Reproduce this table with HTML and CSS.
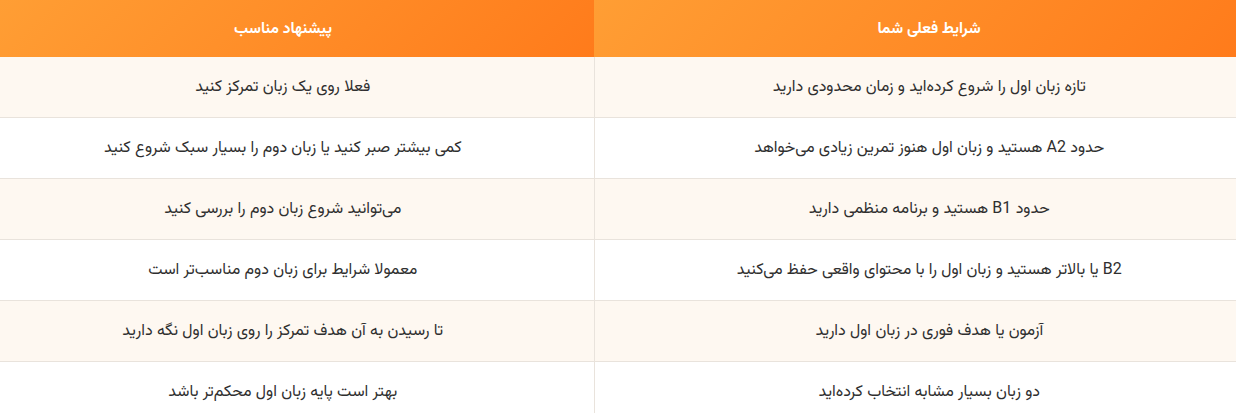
FILE: index.html
```html
<!DOCTYPE html>
<html lang="fa" dir="rtl">
<head>
<meta charset="utf-8">
<link rel="stylesheet" href="styles.css">
</head>
<body>
<table class="compare">
  <thead>
    <tr>
      <th class="col-now">شرایط فعلی شما</th>
      <th class="col-tip">پیشنهاد مناسب</th>
    </tr>
  </thead>
  <tbody>
    <tr><td>تازه زبان اول را شروع کرده‌اید و زمان محدودی دارید</td><td>فعلا روی یک زبان تمرکز کنید</td></tr>
    <tr><td>حدود A2 هستید و زبان اول هنوز تمرین زیادی می‌خواهد</td><td>کمی بیشتر صبر کنید یا زبان دوم را بسیار سبک شروع کنید</td></tr>
    <tr><td>حدود B1 هستید و برنامه منظمی دارید</td><td>می‌توانید شروع زبان دوم را بررسی کنید</td></tr>
    <tr><td>B2 یا بالاتر هستید و زبان اول را با محتوای واقعی حفظ می‌کنید</td><td>معمولا شرایط برای زبان دوم مناسب‌تر است</td></tr>
    <tr><td>آزمون یا هدف فوری در زبان اول دارید</td><td>تا رسیدن به آن هدف تمرکز را روی زبان اول نگه دارید</td></tr>
    <tr><td>دو زبان بسیار مشابه انتخاب کرده‌اید</td><td>بهتر است پایه زبان اول محکم‌تر باشد</td></tr>
  </tbody>
</table>
</body>
</html>
```

FILE: styles.css
```css
html, body {
  margin: 0;
  padding: 0;
  background: #ffffff;
}
body {
  font-family: "Vazirmatn", "Noto Sans Arabic", "DejaVu Sans", sans-serif;
  color: #2f2f2f;
}
.compare {
  width: 1236px;
  border-collapse: collapse;
  table-layout: fixed;
}
.compare th,
.compare td {
  padding: 0 10px 0 38px;
  text-align: center;
}
.compare th + th,
.compare td + td {
  padding: 0 38px 0 10px;
}
.compare th {
  height: 57px;
  color: #ffffff;
  font-size: 15.5px;
  font-weight: bold;
  background: linear-gradient(135deg, #ff9e34 0%, #ff7b1b 100%);
}
.col-now { width: 594px; }
.compare td {
  height: 60px;
  font-size: 16px;
  border-bottom: 1px solid #e9e3dc;
}
.compare td + td {
  border-right: 1px solid #e9e3dc;
}
.compare tbody tr:nth-child(odd) td {
  background: #fef8f1;
}
```
